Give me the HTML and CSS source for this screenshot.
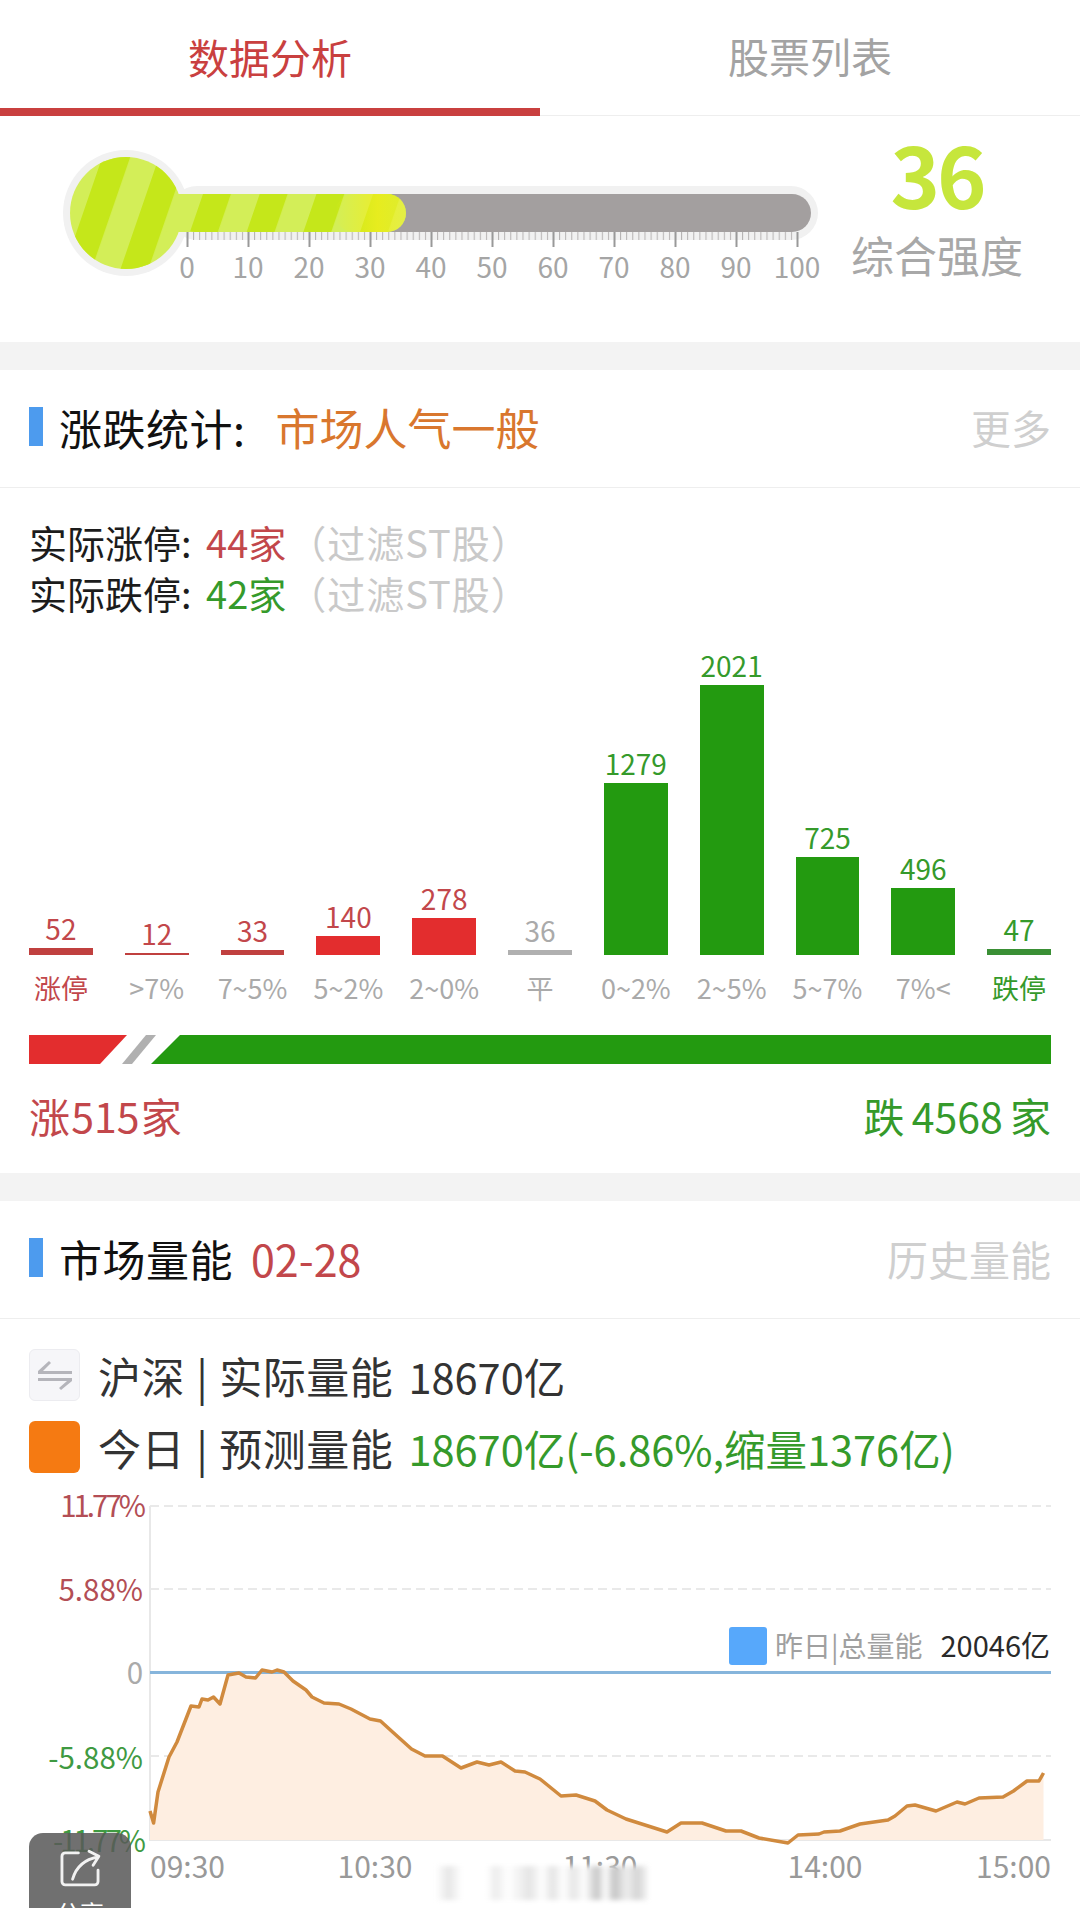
FILE: index.html
```html
<!DOCTYPE html>
<html lang="zh">
<head>
<meta charset="utf-8">
<title>数据分析</title>
<link rel="stylesheet" href="styles.css">
</head>
<body>
<main class="page">
  <nav class="tabs">
    <div class="tab active">数据分析</div>
    <div class="tab">股票列表</div>
  </nav>

  <section class="gauge">
    <svg class="gauge-svg" width="840" height="226" viewBox="0 116 840 226">
      <defs>
        <pattern id="stripes" width="56.7" height="10" x="43" patternUnits="userSpaceOnUse" patternTransform="skewX(-19)">
          <rect class="stripe-dark" x="0" y="0" width="28" height="10"/>
        </pattern>
        <pattern id="minor" width="6.1" height="10" x="187" y="232" patternUnits="userSpaceOnUse">
          <rect class="tick-minor" x="0" y="0" width="1" height="8"/>
        </pattern>
        <linearGradient id="tip" x1="335" x2="406" y1="0" y2="0" gradientUnits="userSpaceOnUse">
          <stop offset="0" stop-color="#f2ee20" stop-opacity="0"/>
          <stop offset="0.6" stop-color="#f2ee20" stop-opacity="0.75"/>
          <stop offset="1" stop-color="#eef03a" stop-opacity="0.6"/>
        </linearGradient>
      </defs>
      <circle class="halo" cx="126" cy="213" r="63"/>
      <rect class="halo" x="170" y="186" width="648" height="54" rx="27"/>
      <rect class="tube" x="170" y="194" width="641" height="38" rx="19"/>
      <circle class="fill-base" cx="126" cy="213" r="56"/>
      <rect class="fill-base" x="150" y="194" width="256" height="38" rx="19"/>
      <circle cx="126" cy="213" r="56" fill="url(#stripes)"/>
      <rect x="176" y="194" width="230" height="38" rx="19" fill="url(#stripes)"/>
      <rect x="335" y="194" width="71" height="38" rx="19" fill="url(#tip)"/>
      <rect x="187" y="232" width="611" height="8" fill="url(#minor)"/>
      <path class="tick-major" d="M187.5 232v15M248.5 232v15M309.5 232v15M370.5 232v15M431.5 232v15M492.5 232v15M553.5 232v15M614.5 232v15M675.5 232v15M736.5 232v15M797.5 232v15"/>
      <g class="gauge-labels">
        <text x="187" y="278">0</text><text x="248" y="278">10</text><text x="309" y="278">20</text>
        <text x="370" y="278">30</text><text x="431" y="278">40</text><text x="492" y="278">50</text>
        <text x="553" y="278">60</text><text x="614" y="278">70</text><text x="675" y="278">80</text>
        <text x="736" y="278">90</text><text x="797" y="278">100</text>
      </g>
    </svg>
    <div class="score">
      <div class="score-num">36</div>
      <div class="score-label">综合强度</div>
    </div>
  </section>

  <section class="card">
    <header class="card-head">
      <span class="card-mark"></span>
      <span class="card-title">涨跌统计:</span>
      <span class="card-status">市场人气一般</span>
      <span class="card-more">更多</span>
    </header>
    <div class="limits">
      <div class="limit-row">实际涨停: <b class="red">44家</b><span class="muted">（过滤ST股）</span></div>
      <div class="limit-row">实际跌停: <b class="green">42家</b><span class="muted">（过滤ST股）</span></div>
    </div>
    <div class="bars">
      <div class="bar-col"><span class="bar-val red">52</span><i class="bar b-dred" style="height:7px"></i><span class="bar-cat red">涨停</span></div>
      <div class="bar-col"><span class="bar-val red">12</span><i class="bar b-dred" style="height:2px"></i><span class="bar-cat">&gt;7%</span></div>
      <div class="bar-col"><span class="bar-val red">33</span><i class="bar b-dred" style="height:5px"></i><span class="bar-cat">7~5%</span></div>
      <div class="bar-col"><span class="bar-val red">140</span><i class="bar b-red" style="height:19px"></i><span class="bar-cat">5~2%</span></div>
      <div class="bar-col"><span class="bar-val red">278</span><i class="bar b-red" style="height:37px"></i><span class="bar-cat">2~0%</span></div>
      <div class="bar-col"><span class="bar-val gray">36</span><i class="bar b-gray" style="height:5px"></i><span class="bar-cat">平</span></div>
      <div class="bar-col"><span class="bar-val green">1279</span><i class="bar b-green" style="height:172px"></i><span class="bar-cat">0~2%</span></div>
      <div class="bar-col"><span class="bar-val green">2021</span><i class="bar b-green" style="height:270px"></i><span class="bar-cat">2~5%</span></div>
      <div class="bar-col"><span class="bar-val green">725</span><i class="bar b-green" style="height:98px"></i><span class="bar-cat">5~7%</span></div>
      <div class="bar-col"><span class="bar-val green">496</span><i class="bar b-green" style="height:67px"></i><span class="bar-cat">7%&lt;</span></div>
      <div class="bar-col"><span class="bar-val green">47</span><i class="bar b-lgreen" style="height:6px"></i><span class="bar-cat green">跌停</span></div>
    </div>
    <svg class="split" width="1022" height="29" viewBox="29 1035 1022 29">
      <polygon class="split-red" points="29,1035 127,1035 100,1064 29,1064"/>
      <polygon class="split-gray" points="146,1035 156,1035 132,1064 122,1064"/>
      <polygon class="split-green" points="180,1035 1051,1035 1051,1064 151,1064"/>
    </svg>
    <div class="totals">
      <span class="red">涨 515 家</span>
      <span class="green">跌 4568 家</span>
    </div>
  </section>

  <section class="card">
    <header class="card-head">
      <span class="card-mark"></span>
      <span class="card-title">市场量能</span>
      <span class="card-date">02-28</span>
      <span class="card-more card-more-wide">历史量能</span>
    </header>
    <div class="legend">
      <div class="legend-row">
        <span class="swatch swatch-ghost">
          <svg width="40" height="32" viewBox="0 0 40 32"><path class="swap-icon" d="M3 12 L37 12 L37 15 L3 15 Z M3 12 L14 2 L16 4 L8 12 Z M3 19 L37 19 L37 22 L3 22 Z M37 22 L26 31 L24 29 L32 22 Z"/></svg>
        </span>
        <span class="legend-text">沪深 | 实际量能 <span class="num ink">18670亿</span></span>
      </div>
      <div class="legend-row">
        <span class="swatch swatch-orange"></span>
        <span class="legend-text">今日 | 预测量能 <span class="num green">18670亿(-6.86%,缩量1376亿)</span></span>
      </div>
    </div>
    <svg class="vol-chart" width="1080" height="418" viewBox="0 1490 1080 418">
      <path class="grid" d="M150 1507H1051M150 1590H1051M150 1757H1051"/>
      <path class="axis" d="M150 1507V1841H1051"/>
      <path class="area" d="M150 1841V1812L153.6 1824L158 1793L169 1758L177 1743L191 1707L199 1708L202 1700L208 1701L213.5 1698L220 1705L228 1676L239 1674L246 1678L255.5 1679L262 1671L272 1673L277 1671L284 1673L293 1682L306 1691L312 1698L324 1704L339 1705L351 1710L370 1720L380.5 1722L392.6 1733L411.5 1750L425 1757L442.5 1757L461 1769L477 1763L489 1766L501 1763L515 1772L525 1773L540 1780L561 1797L576 1796L595 1802L607 1811L626 1820L667 1833L681 1824L702 1824L726 1832L741 1832L759 1839L788 1844L798 1836L819 1835L824 1833L840 1832L860 1825L888 1821L895 1817L907 1807L915 1806L936 1812L957 1803L965 1805L979 1799L1003 1798L1013.5 1792L1027 1782L1039 1782L1043.5 1774V1841Z"/>
      <path class="zero" d="M150 1673.5H1051"/>
      <path class="line" d="M150 1812L153.6 1824L158 1793L169 1758L177 1743L191 1707L199 1708L202 1700L208 1701L213.5 1698L220 1705L228 1676L239 1674L246 1678L255.5 1679L262 1671L272 1673L277 1671L284 1673L293 1682L306 1691L312 1698L324 1704L339 1705L351 1710L370 1720L380.5 1722L392.6 1733L411.5 1750L425 1757L442.5 1757L461 1769L477 1763L489 1766L501 1763L515 1772L525 1773L540 1780L561 1797L576 1796L595 1802L607 1811L626 1820L667 1833L681 1824L702 1824L726 1832L741 1832L759 1839L788 1844L798 1836L819 1835L824 1833L840 1832L860 1825L888 1821L895 1817L907 1807L915 1806L936 1812L957 1803L965 1805L979 1799L1003 1798L1013.5 1792L1027 1782L1039 1782L1043.5 1774"/>
      <g class="y-labels">
        <text class="fill-red tight" x="143" y="1518">11.77%</text>
        <text class="fill-red" x="143" y="1602">5.88%</text>
        <text class="fill-gray" x="143" y="1685">0</text>
        <text class="fill-green" x="143" y="1770">-5.88%</text>
        <text class="fill-green tight" x="143" y="1853">-11.77%</text>
      </g>
      <g class="x-labels">
        <text x="150" y="1879">09:30</text>
        <text class="mid" x="375" y="1879">10:30</text>
        <text class="mid" x="600" y="1879">11:30</text>
        <text class="mid" x="825" y="1879">14:00</text>
        <text class="end" x="1051" y="1879">15:00</text>
      </g>
      <rect class="key" x="729" y="1628" width="38" height="38" rx="3"/>
      <text class="key-label" x="775" y="1658">昨日|总量能</text>
      <text class="key-value" x="1050" y="1658">20046亿</text>
    </svg>
  </section>

  <div class="blur-strip"></div>

  <aside class="share">
    <svg width="52" height="50" viewBox="0 0 52 50">
      <path class="share-icon" d="M24 6H8a4 4 0 0 0-4 4V41a4 4 0 0 0 4 4H44a4 4 0 0 0 4-4V27"/>
      <path class="share-icon" d="M17 38C21 24 31 14 48 11M37 4L49 10L42 21"/>
    </svg>
    <span class="share-text">分享</span>
  </aside>
</main>
</body>
</html>
```
FILE: styles.css
```css
* { box-sizing: border-box; margin: 0; padding: 0; }
html, body { width: 1080px; height: 1908px; overflow: hidden; background: #fff; }
.page {
  position: relative;
  width: 1080px;
  height: 1908px;
  overflow: hidden;
  background: #fff;
  font-family: "Noto Sans CJK SC", "Noto Sans", sans-serif;
  color: #1c1c1c;
}
.red { color: #c2474b; }
.green { color: #359a2b; }
.gray { color: #aaa; }
.muted { color: #c9c9c9; letter-spacing: 1px; margin-left: 2px; }
.ink { color: #333; }
b { font-weight: 400; margin-left: 6px; }

/* tabs */
.tabs { display: flex; height: 116px; }
.tab {
  flex: 1;
  display: flex;
  align-items: center;
  justify-content: center;
  padding-bottom: 6px;
  font-size: 41px;
  color: #a3a3a3;
  border-bottom: 1px solid #eee;
}
.tab.active { color: #c9403f; border-bottom: 8px solid #c9403f; padding: 3px 0 0; }

/* gauge */
.gauge { display: flex; height: 226px; }
.gauge-svg { display: block; flex: none; }
.halo { fill: #f1f1f1; }
.tube { fill: #a39f9f; }
.fill-base { fill: #d3ee58; }
.stripe-dark { fill: #c5e71a; }
.tick-minor { fill: #b5b2b2; }
.tick-major { stroke: #999; stroke-width: 2; fill: none; }
.gauge-labels text { font-size: 28px; fill: #a5a5a5; text-anchor: middle; }
.score { width: 194px; display: flex; flex-direction: column; align-items: center; }
.score-num { font-size: 84px; line-height: 84px; font-weight: 700; letter-spacing: -3px; color: #c6e63c; margin-top: 15px; }
.score-label { font-size: 43px; line-height: 56px; color: #a8a8a8; margin-top: 11px; }

/* cards */
.card { border-top: 28px solid #f3f3f3; }
.card-head {
  display: flex;
  align-items: center;
  height: 118px;
  padding: 0 29px 4px;
  border-bottom: 1px solid #eee;
}
.card-mark { width: 14px; height: 39px; background: #4d9bee; margin-right: 16px; }
.card-title { font-size: 43px; letter-spacing: 0.5px; color: #111; }
.card-status { font-size: 44px; color: #d9772e; margin-left: 30px; }
.card-date { font-size: 43px; color: #c2474b; margin-left: 18px; }
.card-more { margin-left: auto; font-size: 40px; color: #cfcfcf; }
.card-more-wide { font-size: 41px; }

.limits { padding: 28px 29px 0; }
.limit-row { font-size: 38px; line-height: 51px; white-space: nowrap; }

.bars {
  display: grid;
  grid-template-columns: repeat(11, minmax(0, 1fr));
  column-gap: 32px;
  align-items: end;
  height: 388px;
  margin: 0 29px;
}
.bar-col { display: flex; flex-direction: column; align-items: center; }
.bar-val { font-size: 28px; line-height: 35px; margin-bottom: 2px; }
.bar { display: block; width: 100%; }
.b-red { background: #e32d2e; }
.b-dred { background: #c0403f; }
.b-gray { background: #b0b0b0; }
.b-green { background: #239a10; }
.b-lgreen { background: #3a8f35; }
.bar-cat { font-size: 27px; line-height: 36px; margin-top: 15px; color: #aaa; white-space: nowrap; }
.bar-cat.red { color: #c2474b; }
.bar-cat.green { color: #359a2b; }

.split { display: block; margin: 29px 29px 0; }
.split-red { fill: #e32d2e; }
.split-gray { fill: #b0b0b0; }
.split-green { fill: #239a10; }
.totals {
  display: flex;
  justify-content: space-between;
  height: 50px;
  margin: 26px 29px 33px;
  font-size: 41px;
  line-height: 50px;
}
.totals .red { word-spacing: -8px; }
.totals .green { word-spacing: -2px; }

/* volume */
.legend { display: flex; flex-direction: column; gap: 20px; padding: 30px 29px 0; }
.legend-row { display: flex; align-items: center; height: 52px; }
.swatch { flex: none; width: 51px; height: 52px; border-radius: 6px; margin-right: 18px; display: flex; align-items: center; justify-content: center; }
.swatch-ghost { background: #f6f6f9; border: 1px solid #ececf0; }
.swatch-orange { background: #f57a12; }
.swap-icon { fill: #b5b5bb; }
.legend-text { font-size: 43px; letter-spacing: 0.5px; word-spacing: 1px; color: #333; white-space: nowrap; }
.num { font-size: 41.5px; letter-spacing: 0; word-spacing: 0; margin-left: 4px; }

.vol-chart { display: block; margin-top: 16px; }
.grid { stroke: #e9e9e9; stroke-width: 2; stroke-dasharray: 9 5; fill: none; }
.axis { stroke: #e8e8e8; stroke-width: 2; fill: none; }
.area { fill: #feeee1; }
.zero { stroke: #86b5dc; stroke-width: 3; fill: none; }
.line { stroke: #d08a3e; stroke-width: 3.5; fill: none; stroke-linejoin: round; }
.y-labels text { font-size: 29.5px; text-anchor: end; }
.y-labels .tight { letter-spacing: -3px; }
.fill-red { fill: #b34e55; }
.fill-green { fill: #3f9a42; }
.fill-gray { fill: #aaa; }
.x-labels text { font-size: 30px; fill: #999; }
.x-labels .mid { text-anchor: middle; }
.x-labels .end { text-anchor: end; }
.key { fill: #57a8fb; }
.key-label { font-size: 28px; fill: #a0a0a0; }
.key-value { font-size: 29px; fill: #2a2a2a; text-anchor: end; }

/* overlays */
.blur-strip {
  position: absolute;
  left: 436px;
  top: 1866px;
  width: 212px;
  height: 34px;
  background:
    linear-gradient(90deg,
      #fff 0, #e6e6e6 6%, #fff 12%, #fff 24%, #ececec 28%, #fff 34%, #f0f0f0 40%, #e4e4e4 44%,
      #fff 50%, #e4e4e4 55%, #fff 60%, #e6e6e6 65%, #fff 70%, #c6c6c6 76%, #fff 80%, #c4c4c4 84%,
      #eee 90%, #d4d4d4 95%, #f6f6f6 100%);
  filter: blur(2.5px);
}
.share {
  position: absolute;
  left: 29px;
  top: 1833px;
  width: 102px;
  height: 95px;
  border-radius: 14px 14px 0 0;
  background: rgba(88, 88, 88, 0.86);
  display: flex;
  flex-direction: column;
  align-items: center;
  padding-top: 15px;
  overflow: hidden;
}
.share-icon { stroke: #f2f2f2; stroke-width: 3.5; fill: none; stroke-linecap: round; stroke-linejoin: round; }
.share-text { font-size: 24px; line-height: 30px; color: #fff; margin-top: 9px; }
```
